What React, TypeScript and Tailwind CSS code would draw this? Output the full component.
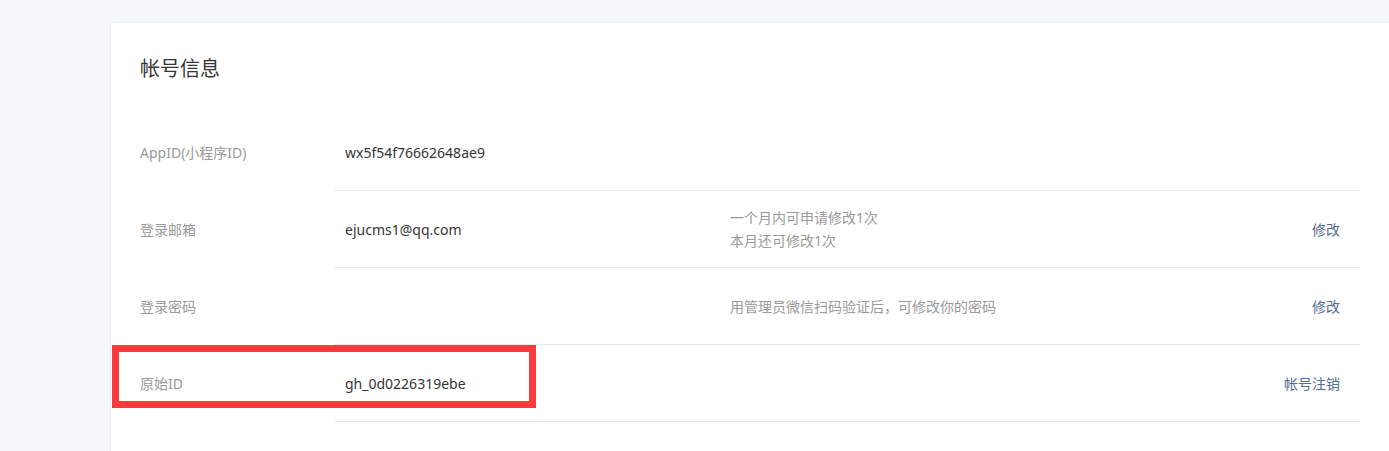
const rows = [
  { label: "AppID(小程序ID)", value: "wx5f54f76662648ae9", tips: [], action: "" },
  {
    label: "登录邮箱",
    value: "ejucms1@qq.com",
    tips: ["一个月内可申请修改1次", "本月还可修改1次"],
    action: "修改",
  },
  { label: "登录密码", value: "", tips: ["用管理员微信扫码验证后，可修改你的密码"], action: "修改" },
  { label: "原始ID", value: "gh_0d0226319ebe", tips: [], action: "帐号注销" },
];

export default function App() {
  return (
    <div
      className="relative flex h-[451px] w-[1389px] overflow-hidden bg-[#f6f7f9] pl-[110px] pt-[22px] text-[14px]"
      style={{ fontFamily: '"Noto Sans", "Noto Sans CJK SC", sans-serif' }}
    >
      <div className="flex flex-1 flex-col rounded-tl-[4px] border-l border-t border-[#eceef1] bg-white pl-[29px] pr-[29px] pt-[32px]">
        <h2 className="text-[20px] leading-[28px] text-[#353535]">帐号信息</h2>
        <div className="mt-[31px] flex flex-col">
          {rows.map((r) => (
            <div key={r.label} className="flex h-[77px]">
              <div className="flex w-[195px] items-center text-[#9a9a9a]">{r.label}</div>
              <div className="flex flex-1 items-center border-b border-[#e7e7eb]">
                <div className="w-[395px] pl-[10px] text-[#353535]">{r.value}</div>
                <div className="flex flex-1 flex-col leading-[23px] text-[#9a9a9a]">
                  {r.tips.map((t) => (
                    <span key={t}>{t}</span>
                  ))}
                </div>
                <div className="pr-[20px] text-[#576b95]">{r.action}</div>
              </div>
            </div>
          ))}
        </div>
      </div>
      {/* annotation box */}
      <div className="absolute left-[112px] top-[345px] h-[63px] w-[424px] border-[7px] border-[#fc3a3c]" />
    </div>
  );
}
